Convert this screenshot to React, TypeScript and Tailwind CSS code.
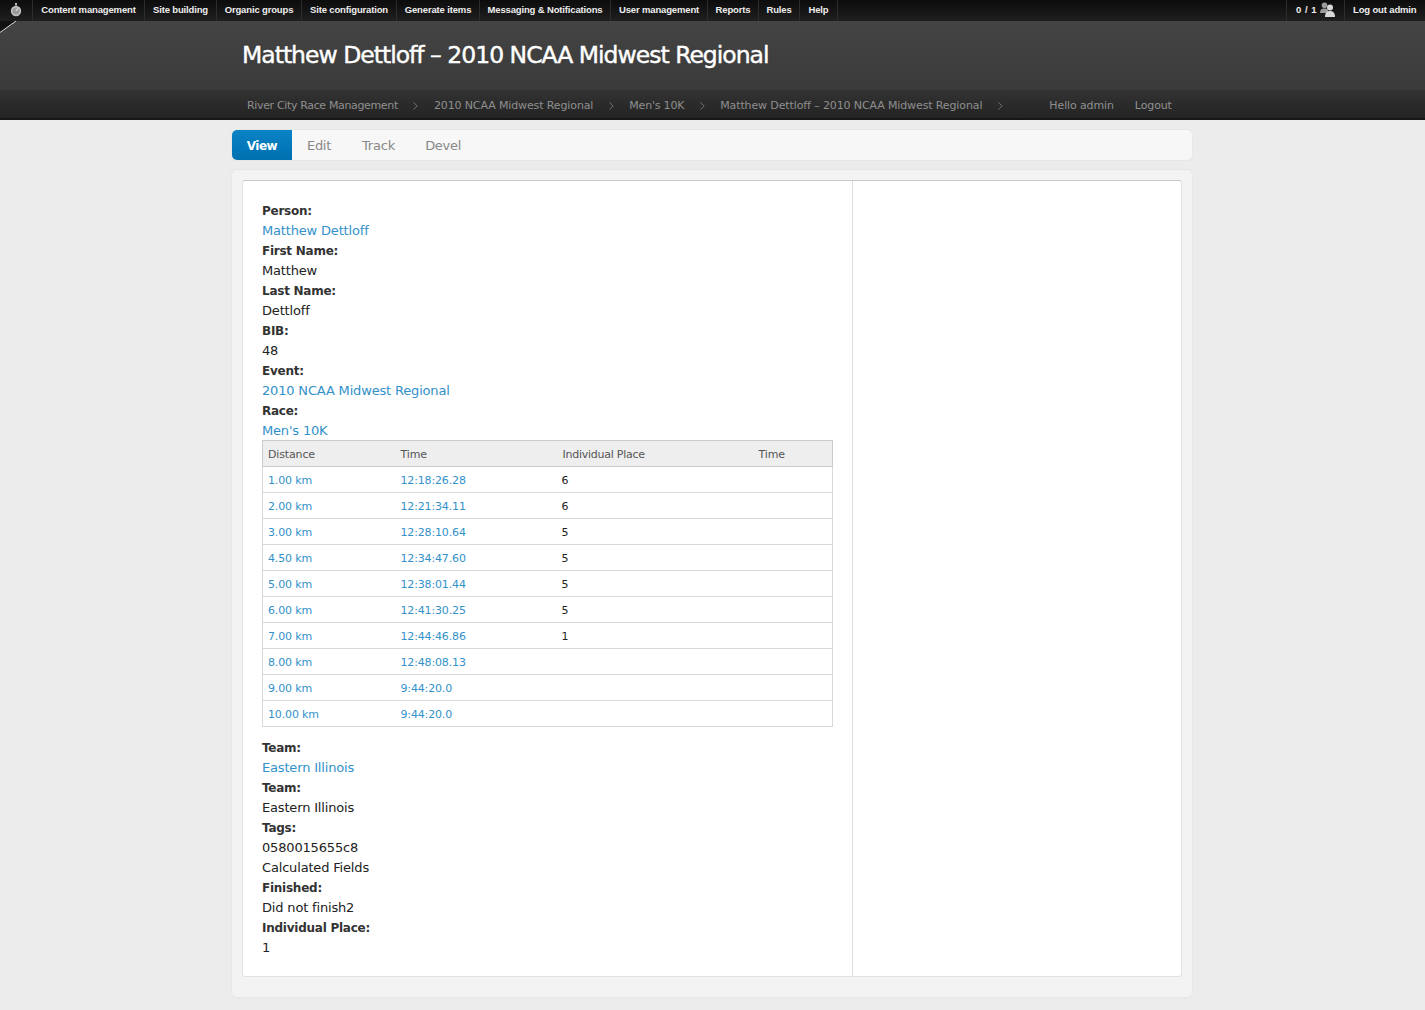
import React from "react";

const adminLinks = [
  { label: "Content management", w: "w-[112px]" },
  { label: "Site building", w: "w-[72px]" },
  { label: "Organic groups", w: "w-[85px]" },
  { label: "Site configuration", w: "w-[95px]" },
  { label: "Generate items", w: "w-[83px]" },
  { label: "Messaging & Notifications", w: "w-[131px]" },
  { label: "User management", w: "w-[97px]" },
  { label: "Reports", w: "w-[51px]" },
  { label: "Rules", w: "w-[41px]" },
  { label: "Help", w: "w-[38px]" },
];

const crumbs = [
  { label: "River City Race Management", cls: "tracking-[-0.35px]" },
  { label: "2010 NCAA Midwest Regional", cls: "" },
  { label: "Men's 10K", cls: "tracking-[-0.2px]" },
  { label: "Matthew Dettloff – 2010 NCAA Midwest Regional", cls: "" },
];

const splits = [
  ["1.00 km", "12:18:26.28", "6"],
  ["2.00 km", "12:21:34.11", "6"],
  ["3.00 km", "12:28:10.64", "5"],
  ["4.50 km", "12:34:47.60", "5"],
  ["5.00 km", "12:38:01.44", "5"],
  ["6.00 km", "12:41:30.25", "5"],
  ["7.00 km", "12:44:46.86", "1"],
  ["8.00 km", "12:48:08.13", ""],
  ["9.00 km", "9:44:20.0", ""],
  ["10.00 km", "9:44:20.0", ""],
];

function Chevron() {
  return (
    <svg width="5" height="8" viewBox="0 0 5 8" className="mx-[15.5px] shrink-0">
      <path d="M0.5 0.5 L4.2 4 L0.5 7.5" fill="none" stroke="#6f6f6f" strokeWidth="1" />
    </svg>
  );
}

function Stopwatch() {
  return (
    <svg width="12" height="14" viewBox="0 0 12 14">
      <rect x="5" y="0" width="2" height="2.5" fill="#bbb" />
      <circle cx="6" cy="8" r="5.2" fill="#c0c0c0" />
      <circle cx="6" cy="8" r="3.6" fill="#9a9a9a" />
      <path d="M6 8 L8 5.2" stroke="#eee" strokeWidth="1" />
    </svg>
  );
}

function Users() {
  return (
    <svg width="15" height="15" viewBox="0 0 15 15">
      <circle cx="4.5" cy="3.2" r="2.8" fill="#9a9a9a" />
      <path d="M0 11 C0 7 2.5 6.5 4.5 6.5 C6.5 6.5 7.5 7 8 8 L8 11 Z" fill="#9a9a9a" />
      <circle cx="10" cy="5.5" r="3" fill="#d8d8d8" />
      <path d="M5 15 C5 10 7.5 9 10 9 C12.5 9 15 10 15 15 Z" fill="#d8d8d8" />
    </svg>
  );
}

function Label({ children }: { children: React.ReactNode }) {
  return <div className="h-5 text-[12px] font-bold tracking-[-0.25px] text-[#333]">{children}</div>;
}

function Value({ children }: { children: React.ReactNode }) {
  return <div className="h-5 text-[#222]">{children}</div>;
}

function Linked({ children }: { children: React.ReactNode }) {
  return (
    <div className="h-5">
      <a className="text-[#3391c9]">{children}</a>
    </div>
  );
}

export default function App() {
  return (
    <div className="min-h-[1010px] bg-[#ececec] font-['DejaVu_Sans',sans-serif] text-[13px] leading-5 tracking-[-0.17px]">
      {/* admin menu */}
      <div className="flex h-[21px] items-center justify-between bg-gradient-to-b from-[#0c0c0c] to-[#1f1f1f] font-['Liberation_Sans',sans-serif] text-[9.5px] font-bold leading-[19px] tracking-[-0.15px] text-[#eee]">
        <div className="flex h-full">
          <div className="flex w-[33px] items-center justify-center border-r border-[#2c2c2c] pb-px">
            <Stopwatch />
          </div>
          {adminLinks.map((l) => (
            <div
              key={l.label}
              className={`${l.w} flex items-center justify-center whitespace-nowrap border-r border-[#2c2c2c] pb-[2px]`}
            >
              {l.label}
            </div>
          ))}
        </div>
        <div className="flex h-full items-center">
          <div className="flex h-full w-[59px] items-center justify-center gap-[3px] border-x border-[#2c2c2c] pb-[2px]">
            <span className="tracking-[0.5px]">0 / 1</span>
            <Users />
          </div>
          <div className="w-[80px] whitespace-nowrap pb-[2px] pl-[8px]">Log out admin</div>
        </div>
      </div>

      {/* title band */}
      <div className="relative h-[69px] bg-gradient-to-b from-[#444444] to-[#3a3a3a]">
        <div className="absolute left-0 top-0 h-[14px] w-[16px] overflow-hidden">
          <svg width="16" height="14" viewBox="0 0 16 14">
            <path d="M0 0 H16 L0 12 Z" fill="#111" />
            <path d="M0 11.5 L16 0" stroke="#ddd" strokeWidth="1" />
          </svg>
        </div>
        <div className="ml-[232px] w-[960px] pl-[10px] pt-[16px]">
          <h1 className="whitespace-nowrap text-[23.5px] font-normal leading-[36px] tracking-[-1px] text-white [-webkit-text-stroke:0.4px_white]">
            Matthew Dettloff – 2010 NCAA Midwest Regional
          </h1>
        </div>
      </div>

      {/* breadcrumb */}
      <div className="h-[30px] border-b-2 border-[#161616] bg-gradient-to-b from-[#333333] to-[#232323]">
        <div className="ml-[232px] flex h-[28px] w-[960px] items-center pl-[15px] pt-[3px] text-[11px] tracking-[-0.12px] text-[#8f8f8f]">
          {crumbs.map((c) => (
            <React.Fragment key={c.label}>
              <span className={`whitespace-nowrap ${c.cls}`}>{c.label}</span>
              <Chevron />
            </React.Fragment>
          ))}
          <span className="ml-[31px] whitespace-nowrap">Hello admin</span>
          <span className="ml-[21px]">Logout</span>
        </div>
      </div>

      <div className="ml-[232px] w-[960px] pt-[10px]">
        {/* tabs */}
        <div className="flex h-[30px] items-center rounded-[5px] bg-[#f7f7f7] text-[#888] shadow-[0_0_0_1px_#e6e6e6]">
          <div className="flex h-full w-[60px] items-center justify-center rounded-l-[5px] bg-gradient-to-b from-[#0a83c6] to-[#0070b0] pt-px text-[12px] font-bold tracking-[-0.5px] text-white">
            View
          </div>
          <div className="ml-[15px] pt-px tracking-[-0.3px]">Edit</div>
          <div className="ml-[31px] pt-px">Track</div>
          <div className="ml-[30px] pt-px tracking-[-0.3px]">Devel</div>
        </div>

        {/* content */}
        <div className="mt-[10px] rounded-[5px] bg-[#f3f3f3] p-[10px] pb-5 shadow-[0_0_0_1px_#e6e6e6]">
          <div className="flex h-[797px] rounded-[3px] border border-[#e2e2e2] border-t-[#c9c9c9] bg-white">
            <div className="w-[610px] border-r border-[#ddd] px-[19px] pt-[20px]">
              <Label>Person:</Label>
              <Linked>Matthew Dettloff</Linked>
              <Label>First Name:</Label>
              <Value>Matthew</Value>
              <Label>Last Name:</Label>
              <Value>Dettloff</Value>
              <Label>BIB:</Label>
              <Value>48</Value>
              <Label>Event:</Label>
              <Linked>2010 NCAA Midwest Regional</Linked>
              <Label>Race:</Label>
              <Linked>Men's 10K</Linked>

              <table className="mb-[11px] -mt-px w-[571px] table-fixed border-collapse text-[11px] tracking-[-0.15px]">
                <thead>
                  <tr className="h-[26px] bg-[#eeeeee] text-left text-[#555]">
                    <th className="w-[133px] border-y border-l border-[#ccc] pl-[5px] pt-[2px] font-normal">Distance</th>
                    <th className="w-[162px] border-y border-[#ccc] pl-[5px] pt-[2px] font-normal">Time</th>
                    <th className="w-[196px] border-y border-[#ccc] pl-[5px] pt-[2px] font-normal tracking-[-0.25px]">Individual Place</th>
                    <th className="border-y border-r border-[#ccc] pl-[5px] pt-[2px] font-normal">Time</th>
                  </tr>
                </thead>
                <tbody>
                  {splits.map(([dist, time, place]) => (
                    <tr key={dist} className="h-[26px] border-b border-[#d8d8d8]">
                      <td className="border-l border-[#d8d8d8] pl-[5px] pt-[2px] text-[#3391c9]">{dist}</td>
                      <td className="pl-[5px] pt-[2px] text-[#3391c9]">{time}</td>
                      <td className="pl-[4px] pt-[2px] text-[#222]">{place}</td>
                      <td className="border-r border-[#d8d8d8]" />
                    </tr>
                  ))}
                </tbody>
              </table>

              <Label>Team:</Label>
              <Linked>Eastern Illinois</Linked>
              <Label>Team:</Label>
              <Value>Eastern Illinois</Value>
              <Label>Tags:</Label>
              <Value>0580015655c8</Value>
              <Value>Calculated Fields</Value>
              <Label>Finished:</Label>
              <Value>Did not finish2</Value>
              <Label>Individual Place:</Label>
              <Value>1</Value>
            </div>
            <div className="flex-1" />
          </div>
        </div>
      </div>
    </div>
  );
}
